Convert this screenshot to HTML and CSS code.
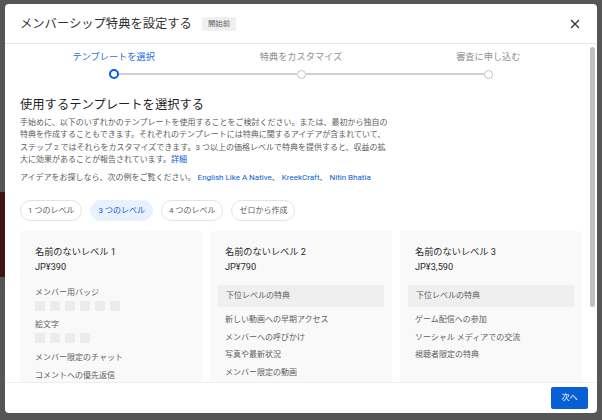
FILE: index.html
```html
<!DOCTYPE html>
<html lang="ja">
<head>
<meta charset="utf-8">
<title>メンバーシップ特典を設定する</title>
<link rel="stylesheet" href="styles.css">
</head>
<body>
<div class="dialog">
  <header class="dlg-header">
    <h1 class="dlg-title">メンバーシップ特典を設定する</h1>
    <span class="badge">開始前</span>
    <button class="close" aria-label="閉じる">
      <svg viewBox="0 0 10 10" width="10" height="10"><path d="M1 1L9 9M9 1L1 9" stroke="#333" stroke-width="1.3" fill="none"/></svg>
    </button>
  </header>

  <main class="dlg-body">
    <ol class="stepper">
      <li class="step active">
        <span class="step-label">テンプレートを選択</span>
        <span class="step-track"><i class="seg hidden"></i><b class="dot"></b><i class="seg"></i></span>
      </li>
      <li class="step">
        <span class="step-label">特典をカスタマイズ</span>
        <span class="step-track"><i class="seg"></i><b class="dot"></b><i class="seg"></i></span>
      </li>
      <li class="step">
        <span class="step-label">審査に申し込む</span>
        <span class="step-track"><i class="seg"></i><b class="dot"></b><i class="seg hidden"></i></span>
      </li>
    </ol>

    <h2 class="section-title">使用するテンプレートを選択する</h2>
    <p class="desc">手始めに、以下のいずれかのテンプレートを使用することをご検討ください。または、最初から独自の<br>特典を作成することもできます。それぞれのテンプレートには特典に関するアイデアが含まれていて、<br>ステップ 2 ではそれらをカスタマイズできます。3 つ以上の価格レベルで特典を提供すると、収益の拡<br>大に効果があることが報告されています。<a class="link" href="#">詳細</a></p>
    <p class="ideas">アイデアをお探しなら、次の例をご覧ください。 <a class="link" href="#">English Like A Native</a>、 <a class="link" href="#">KreekCraft</a>、 <a class="link" href="#">Nitin Bhatia</a></p>

    <div class="chips">
      <button class="chip">1 つのレベル</button>
      <button class="chip selected">3 つのレベル</button>
      <button class="chip">4 つのレベル</button>
      <button class="chip">ゼロから作成</button>
    </div>

    <div class="cards">
      <section class="card">
        <h3 class="card-title">名前のないレベル 1</h3>
        <div class="price">JP¥390</div>
        <div class="perk-label">メンバー用バッジ</div>
        <div class="swatches"><i></i><i></i><i></i><i></i><i></i><i></i></div>
        <div class="perk-label second">絵文字</div>
        <div class="swatches"><i></i><i></i><i></i><i></i></div>
        <ul class="perks first-card">
          <li>メンバー限定のチャット</li>
          <li>コメントへの優先返信</li>
        </ul>
      </section>
      <section class="card">
        <h3 class="card-title">名前のないレベル 2</h3>
        <div class="price">JP¥790</div>
        <div class="tier-box">下位レベルの特典</div>
        <ul class="perks">
          <li>新しい動画への早期アクセス</li>
          <li>メンバーへの呼びかけ</li>
          <li>写真や最新状況</li>
          <li>メンバー限定の動画</li>
        </ul>
      </section>
      <section class="card">
        <h3 class="card-title">名前のないレベル 3</h3>
        <div class="price">JP¥3,590</div>
        <div class="tier-box">下位レベルの特典</div>
        <ul class="perks">
          <li>ゲーム配信への参加</li>
          <li>ソーシャル メディアでの交流</li>
          <li>視聴者限定の特典</li>
        </ul>
      </section>
    </div>
  </main>

  <footer class="dlg-footer">
    <button class="next">次へ</button>
  </footer>

  <div class="scrollbar"></div>
</div>
</body>
</html>
```

FILE: styles.css
```css
* { box-sizing: border-box; }

html, body { height: 420px; }

body {
  margin: 0;
  overflow: hidden;
  font-family: Roboto, "Noto Sans CJK JP", sans-serif;
  background:
    linear-gradient(#3e1515, #3e1515) 0 192px / 5px 85px no-repeat,
    #565656;
}

.dialog {
  position: relative;
  margin: 4px 5px 0;
  width: 592px;
  height: 409px;
  background: #fff;
  border-radius: 4px;
  display: flex;
  flex-direction: column;
  overflow: hidden;
}

/* header */
.dlg-header {
  flex: none;
  height: 40px;
  display: flex;
  align-items: center;
  padding: 0 17px 0 15px;
  border-bottom: 1px solid #e6e6e6;
}
.dlg-title {
  margin: 0;
  font-size: 12.3px;
  line-height: 16px;
  font-weight: 400;
  color: #333;
}
.badge {
  margin-left: 10px;
  padding: 0 6px;
  background: #f0f0f0;
  color: #606060;
  font-size: 7.4px;
  line-height: 14px;
  border-radius: 2px;
}
.close {
  margin-left: auto;
  padding: 0;
  border: 0;
  background: none;
  width: 10px;
  height: 10px;
  display: block;
}
.close svg { display: block; }

/* body */
.dlg-body {
  flex: 1;
  overflow: hidden;
  padding: 0 15px;
}

.stepper {
  list-style: none;
  margin: 7px 0 0;
  padding: 0;
  display: grid;
  grid-template-columns: repeat(3, 1fr);
}
.step {
  display: flex;
  flex-direction: column;
  text-align: center;
}
.step-label {
  font-size: 9.2px;
  line-height: 12px;
  color: #909090;
}
.step.active .step-label { color: #1f6fd8; }
.step-track {
  display: flex;
  align-items: center;
  height: 10px;
  margin-top: 6px;
}
.seg {
  flex: 1;
  height: 1.5px;
  background: #d0d0d0;
}
.seg.hidden { background: transparent; }
.dot {
  flex: none;
  width: 9px;
  height: 9px;
  border-radius: 50%;
  border: 1.5px solid #c4c4c4;
  background: #fff;
}
.step.active .dot {
  width: 10px;
  height: 10px;
  border: 2.2px solid #065fd4;
}

.section-title {
  margin: 18px 0 0;
  font-size: 12.3px;
  line-height: 16px;
  font-weight: 400;
  color: #1f1f1f;
}
.desc {
  margin: 4px 0 0;
  font-size: 8px;
  line-height: 12.4px;
  color: #606060;
}
.ideas {
  margin: 5px 0 0;
  font-size: 8px;
  line-height: 12.4px;
  color: #606060;
}
.link {
  color: #065fd4;
  text-decoration: none;
}

.chips {
  display: flex;
  gap: 8px;
  margin-top: 16px;
}
.chip {
  font-family: inherit;
  font-size: 8px;
  line-height: 19px;
  height: 21px;
  padding: 0 7px;
  border: 1px solid #e3e3e3;
  border-radius: 11px;
  background: #fff;
  color: #606060;
}
.chip.selected {
  background: #e8f1fd;
  border-color: #e8f1fd;
  color: #065fd4;
}

.cards {
  display: grid;
  grid-template-columns: repeat(3, 1fr);
  gap: 8px;
  margin-top: 10px;
}
.card {
  background: #f9f9f9;
  border-radius: 4px;
  padding: 14px 15px 15px;
}
.card-title {
  margin: 0;
  font-size: 9.2px;
  line-height: 14px;
  font-weight: 400;
  color: #282828;
}
.price {
  margin-top: 1px;
  font-size: 9.2px;
  line-height: 14px;
  color: #282828;
}
.perk-label {
  margin-top: 13px;
  font-size: 8px;
  line-height: 12px;
  color: #606060;
}
.perk-label.second { margin-top: 8px; }
.swatches {
  display: flex;
  gap: 5px;
  margin-top: 2px;
}
.swatches i {
  width: 10px;
  height: 10px;
  background: #ececec;
  border-radius: 1px;
}
.tier-box {
  margin: 11px -7px 0;
  padding: 0 8px;
  background: #efefef;
  border-radius: 3px;
  font-size: 8px;
  line-height: 22px;
  color: #606060;
}
.perks {
  list-style: none;
  margin: 7px 0 0;
  padding: 0;
  display: flex;
  flex-direction: column;
  gap: 5.5px;
}
.perks.first-card { margin-top: 9px; }
.perks li {
  font-size: 8px;
  line-height: 12px;
  color: #606060;
}

/* footer */
.dlg-footer {
  flex: none;
  height: 31px;
  border-top: 1px solid #eeeeee;
  display: flex;
  justify-content: flex-end;
  align-items: center;
  padding: 0 9px;
}
.next {
  font-family: inherit;
  font-size: 8px;
  line-height: 22px;
  height: 22px;
  padding: 0 10.5px;
  border: 0;
  border-radius: 2px;
  background: #065fd4;
  color: #fff;
}

.scrollbar {
  position: absolute;
  left: 585px;
  top: 43px;
  width: 5px;
  height: 260px;
  border-radius: 2.5px;
  background: #c1c1c1;
}
```
